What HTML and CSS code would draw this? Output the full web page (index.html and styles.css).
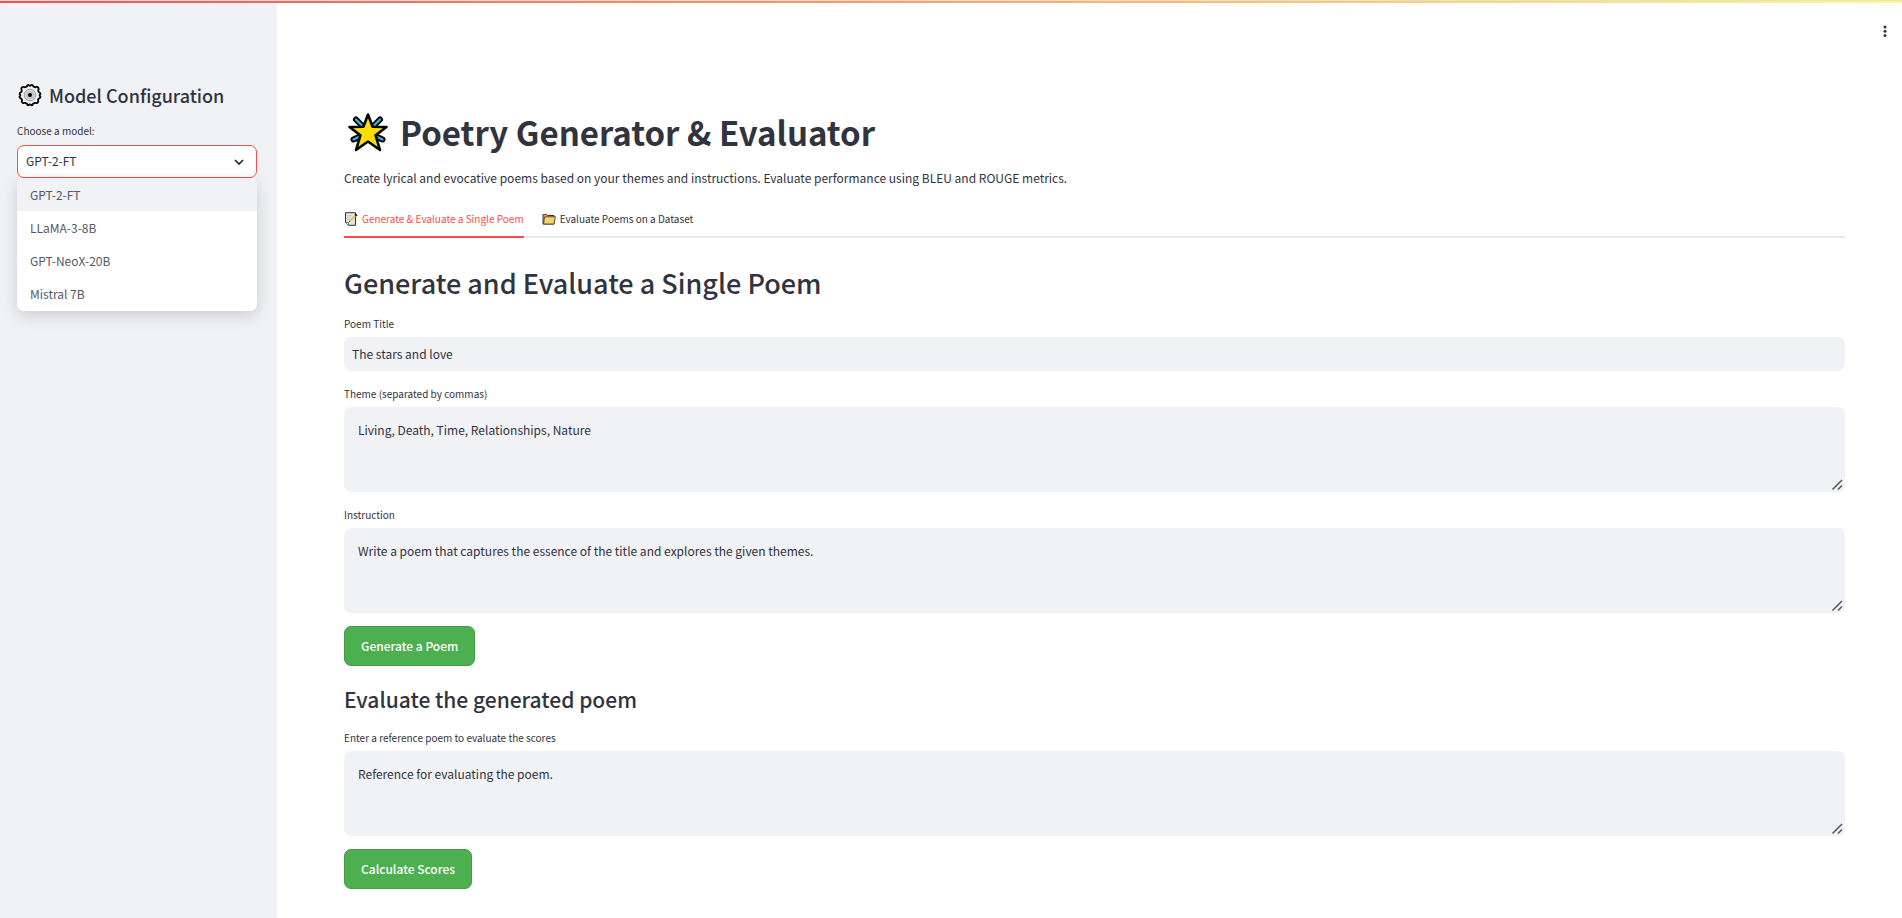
FILE: index.html
```html
<!DOCTYPE html>
<html lang="en">
<head>
<meta charset="utf-8">
<title>Poetry Generator &amp; Evaluator</title>
<link rel="stylesheet" href="styles.css">
</head>
<body>
<div class="decoration"></div>
<div class="app">
  <aside class="sidebar">
    <h2 class="sidebar-title">
      <svg class="gear" viewBox="-1 -1 26 26" aria-hidden="true">
        <path d="M9 3.500Q9 1.800 10.400 1.800Q12 3.800 13.600 1.800Q15 1.800 15.300 3.400L17.500 4.300Q19.300 3.300 20.500 5Q21 6 20.200 7.400L20.700 9Q22.700 9.600 22.500 11Q20.700 12.200 22.500 13.700Q22.500 15 20.700 15.500L20 17Q20.800 18.800 19.500 19.700Q18.500 20.500 17 19.800L15.200 20.500Q14.800 22.300 13.400 22.300Q12 20.500 10.600 22.300Q9.200 22.300 8.800 20.500L7 19.800Q5.500 20.500 4.500 19.700Q3.200 18.800 4 17L3.300 15.500Q1.500 15 1.500 13.700Q3.300 12.200 1.500 11Q1.300 9.600 3.300 9L3.800 7.400Q3 6 3.500 5Q4.700 3.300 6.500 4.300Z" fill="#f0f0f2" stroke="#000" stroke-width="1.800" stroke-linejoin="round"/>
        <circle cx="12" cy="12" r="5.800" fill="#d8d8d8" stroke="#a0a0a0" stroke-width="1"/>
        <circle cx="12" cy="12" r="3.600" fill="#c8c8c8" stroke="#b0b0b0" stroke-width=".5"/>
        <circle cx="12" cy="12" r="2" fill="#000"/>
      </svg>
      <span>Model Configuration</span>
    </h2>
    <label class="label" for="model">Choose a model:</label>
    <div class="select-wrap">
      <select class="select" id="model">
        <option>GPT-2-FT</option>
        <option>LLaMA-3-8B</option>
        <option>GPT-NeoX-20B</option>
        <option>Mistral 7B</option>
      </select>
      <svg class="chevron" viewBox="0 0 10 10" aria-hidden="true"><path d="M1 3L5 7L9 3" fill="none" stroke="#262730" stroke-width="1.700"/></svg>
      <ul class="menu" role="listbox" aria-label="Choose a model">
        <li class="menu-item menu-item-active" role="option" aria-selected="true">GPT-2-FT</li>
        <li class="menu-item" role="option" aria-selected="false">LLaMA-3-8B</li>
        <li class="menu-item" role="option" aria-selected="false">GPT-NeoX-20B</li>
        <li class="menu-item" role="option" aria-selected="false">Mistral 7B</li>
      </ul>
    </div>
  </aside>
  <main class="main">
    <button class="more" type="button" aria-label="Main menu">
      <svg viewBox="0 0 16 16" width="16" height="16" aria-hidden="true"><g fill="#31333f"><circle cx="8" cy="4" r="1.500"/><circle cx="8" cy="8.200" r="1.500"/><circle cx="8" cy="12.400" r="1.500"/></g></svg>
    </button>
    <h1 class="title">
      <svg class="star" viewBox="0 0 48 48" aria-hidden="true">
        <g stroke-linecap="round" fill="none">
          <path d="M12 11.500L18 17.500M36 11.500L30 17.500M9.500 31.500L17 28M38.500 31.500L31 28" stroke="#000" stroke-width="6"/>
          <path d="M12 11.500L18 17.500M36 11.500L30 17.500M9.500 31.500L17 28M38.500 31.500L31 28" stroke="#3fb4e0" stroke-width="2.200"/>
        </g>
        <path d="M24 6.500L28.600 18.700L42.500 19L31.600 27.300L36 42L24 33.500L12 42L16.400 27.300L5.500 19L19.400 18.700Z" fill="#fcdf05" stroke="#000" stroke-width="2.600" stroke-linejoin="round"/>
      </svg>
      <span>Poetry Generator &amp; Evaluator</span>
    </h1>
    <p class="intro">Create lyrical and evocative poems based on your themes and instructions. Evaluate performance using BLEU and ROUGE metrics.</p>
    <div class="tabs" role="tablist">
      <button class="tab tab-active" type="button" role="tab" aria-selected="true">
        <svg class="tab-icon" viewBox="0 0 14 14" aria-hidden="true">
          <path d="M1.500 .7H11.500V13.300H4.500L1.500 10.500Z" fill="#e4e4e4" stroke="#333" stroke-width="1"/>
          <path d="M3 3.500H8M3 5.500H7M3 7.500H6" stroke="#c4c4c4" stroke-width=".8"/>
          <path d="M1.500 10.500H4.500V13" fill="#fff" stroke="#555" stroke-width=".8"/>
          <path d="M5.500 9.500L11.500 3.500" stroke="#f2b92f" stroke-width="1.700"/>
          <path d="M11 2L13 3.800" stroke="#222" stroke-width="1.800"/>
          <path d="M5 10L6 9" stroke="#555" stroke-width="1"/>
        </svg>
        <span>Generate &amp; Evaluate a Single Poem</span>
      </button>
      <button class="tab" type="button" role="tab" aria-selected="false">
        <svg class="tab-icon" viewBox="0 0 14 14" aria-hidden="true">
          <path d="M1 12V2.500H4.500L5.500 3.500H12V12Z" fill="#f0b04a" stroke="#222" stroke-width=".9" stroke-linejoin="round"/>
          <path d="M1.500 2.500H4.500" stroke="#a33" stroke-width="1.200"/>
          <path d="M1.500 12L2.600 4.800H13.400L12 12Z" fill="#fbcf6b" stroke="#333" stroke-width=".8" stroke-linejoin="round"/>
        </svg>
        <span>Evaluate Poems on a Dataset</span>
      </button>
    </div>
    <h2 class="section-title">Generate and Evaluate a Single Poem</h2>
    <div class="field">
      <label class="label" for="poem-title">Poem Title</label>
      <input class="input" id="poem-title" type="text" value="The stars and love">
    </div>
    <div class="field">
      <label class="label" for="theme">Theme (separated by commas)</label>
      <textarea class="textarea" id="theme">Living, Death, Time, Relationships, Nature</textarea>
    </div>
    <div class="field">
      <label class="label" for="instruction">Instruction</label>
      <textarea class="textarea" id="instruction">Write a poem that captures the essence of the title and explores the given themes.</textarea>
    </div>
    <button class="button" type="button">Generate a Poem</button>
    <h3 class="subsection-title">Evaluate the generated poem</h3>
    <div class="field">
      <label class="label" for="reference">Enter a reference poem to evaluate the scores</label>
      <textarea class="textarea" id="reference">Reference for evaluating the poem.</textarea>
    </div>
    <button class="button" type="button">Calculate Scores</button>
  </main>
</div>
</body>
</html>
```
FILE: styles.css
```css
* { box-sizing: border-box; }
body {
  margin: 0;
  background: #fff;
  color: #31333f;
  font-family: "Noto Sans CJK SC", "Noto Sans", sans-serif;
  font-size: 12px;
  line-height: 20px;
}
button, input, select, textarea { font: inherit; color: inherit; }
h1, h2, h3, p, ul { margin: 0; padding: 0; }
.decoration {
  position: absolute;
  top: 0;
  left: 0;
  right: 0;
  height: 3px;
  border-top: 1px solid #dee1e3;
  background: linear-gradient(90deg, #ff4b4b, #fffd80);
}
.app { display: flex; min-height: 100vh; }
.sidebar {
  flex: 0 0 277px;
  padding: 79px 20px 0 17px;
  background: #f0f2f6;
}
.sidebar-title {
  display: flex;
  align-items: center;
  gap: 6px;
  margin-bottom: 10px;
  font-size: 18px;
  line-height: 32px;
  font-weight: 500;
}
.gear { width: 26px; height: 26px; }
.label {
  display: block;
  margin-bottom: 3px;
  font-size: 10px;
  line-height: 20px;
}
.select-wrap { position: relative; margin-top: 4px; }
.select {
  display: block;
  width: 100%;
  height: 33px;
  padding: 0 8px 2px;
  border: 1px solid #ff4b4b;
  border-radius: 7px;
  background: #fff;
  appearance: none;
  outline: none;
}
.chevron {
  position: absolute;
  top: 12px;
  right: 13px;
  width: 10px;
  height: 10px;
  pointer-events: none;
}
.menu {
  position: absolute;
  top: 100%;
  left: 0;
  right: 0;
  overflow: hidden;
  padding-bottom: 1px;
  border-radius: 7px;
  background: #fff;
  color: #565863;
  list-style: none;
  box-shadow: 0 4px 16px rgba(0, 0, 0, .16);
}
.menu-item { padding: 7px 13px 6px; }
.menu-item-active { background: #f0f2f6; }
.main {
  position: relative;
  flex: 1;
  min-width: 0;
  padding: 105px 57px 29px 67px;
}
.more {
  position: absolute;
  top: 23px;
  right: 9px;
  display: flex;
  padding: 0;
  border: 0;
  background: none;
}
.title {
  display: flex;
  align-items: center;
  gap: 8px;
  margin-bottom: 8px;
  font-size: 33px;
  line-height: 54px;
  font-weight: 700;
}
.star { width: 48px; height: 48px; }
.intro { line-height: 22px; }
.tabs {
  display: flex;
  gap: 18px;
  margin-top: 13px;
  box-shadow: inset 0 -2px #e8e9eb;
}
.tab {
  display: flex;
  align-items: center;
  gap: 4px;
  height: 36px;
  padding: 0;
  border: 0;
  border-bottom: 2px solid transparent;
  background: none;
  font-size: 10px;
}
.tab-active { border-bottom-color: #ff4b4b; color: #ff4b4b; }
.tab-icon { width: 14px; height: 14px; }
.section-title {
  margin: 25px 0 11px;
  font-size: 27px;
  line-height: 40px;
  font-weight: 500;
}
.field { margin-bottom: 13px; }
.input {
  display: block;
  width: 100%;
  height: 34px;
  padding: 0 8px 2px;
  border: 0;
  border-radius: 7px;
  background: #f0f2f6;
}
.textarea {
  display: block;
  width: 100%;
  height: 85px;
  padding: 13px 14px;
  border: 0;
  border-radius: 7px;
  background: #f0f2f6;
  resize: vertical;
}
.textarea::-webkit-resizer {
  background: url("data:image/svg+xml,%3Csvg xmlns='http://www.w3.org/2000/svg' width='15' height='15'%3E%3Cpath d='M2.500 12.500L12 3M8 12.500L12 8.500' stroke='%23555' stroke-width='1.500'/%3E%3C/svg%3E") no-repeat;
}
.button {
  display: block;
  height: 40px;
  padding: 0 16px;
  border: 1px solid #449c48;
  border-radius: 7px;
  background: #4caf50;
  color: #fff;
  font-weight: 500;
}
.subsection-title {
  margin: 17px 0 13px;
  font-size: 21px;
  line-height: 32px;
  font-weight: 500;
}
```
